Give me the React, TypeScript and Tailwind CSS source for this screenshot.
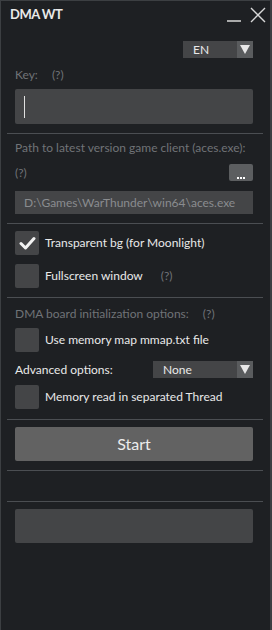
import React from "react";

function Divider() {
  return <div className="h-px bg-[#4b4e52] ml-[-8px] mr-[-10px]" />;
}

function Checkbox({ checked }: { checked?: boolean }) {
  return (
    <div className="w-[24px] h-[24px] rounded-[2px] bg-[#444547] flex items-center justify-center shrink-0">
      {checked && (
        <svg width="17" height="14" viewBox="0 0 17 14">
          <path d="M2 7.5 L6.5 12 L15 2.5" stroke="#f2f2f2" strokeWidth="3" fill="none" strokeLinecap="round" strokeLinejoin="round" />
        </svg>
      )}
    </div>
  );
}

function Arrow() {
  return (
    <div className="w-[16px] self-stretch bg-[#5a5c5e] flex items-center justify-center">
      <svg width="10" height="9" viewBox="0 0 10 9">
        <path d="M0 0 H10 L5 9 Z" fill="#e8e8e8" />
      </svg>
    </div>
  );
}

export default function App() {
  return (
    <div
      className="w-[272px] h-[630px] bg-[#1e2023] border-l border-r-2 border-t border-[#3c3f42] text-[#e9e9e9] flex flex-col"
      style={{ fontFamily: "Lato, 'Noto Sans', sans-serif" }}
    >
      {/* Title */}
      <div className="flex items-center justify-between h-[28px] pl-[9px] pr-[4px]">
        <span className="text-[13px] font-bold tracking-[-0.5px]">DMA WT</span>
        <div className="flex items-center gap-[8px]">
          <svg width="16" height="16" viewBox="0 0 16 16">
            <path d="M1 14 H15" stroke="#d8d8d8" strokeWidth="1.5" />
          </svg>
          <svg width="16" height="16" viewBox="0 0 16 16">
            <path d="M1 1 L15 15 M15 1 L1 15" stroke="#d8d8d8" strokeWidth="1.4" />
          </svg>
        </div>
      </div>

      <div className="flex flex-col pl-[14px] pr-[17px]">
        {/* Language */}
        <div className="flex justify-end mt-[12px]">
          <div className="w-[70px] h-[17px] bg-[#444547] flex items-center">
            <span className="flex-1 pl-[10px] text-[12px] leading-none">EN</span>
            <Arrow />
          </div>
        </div>

        <div className="flex gap-[14px] text-[12px] text-[#707377] mt-[10px] h-[14px] items-center">
          <span>Key:</span>
          <span>(?)</span>
        </div>

        <div className="mt-[7px] h-[35px] bg-[#444547] rounded-[2px] flex items-center pl-[9px]">
          <div className="w-px h-[22px] bg-[#e0e0e0]" />
        </div>

        <div className="mt-[9px]">
          <Divider />
        </div>

        <div className="text-[12px] text-[#707377] mt-[7px] leading-[14px] whitespace-nowrap">
          Path to latest version game client (aces.exe):
        </div>
        <div className="flex items-center justify-between mt-[9px] h-[17px]">
          <span className="text-[12px] text-[#707377]">(?)</span>
          <div className="w-[24px] h-[17px] bg-[#5c5e60] rounded-[2px] flex items-end justify-center gap-[1px] pb-[2px]">
            <div className="w-[2px] h-[2px] bg-white" />
            <div className="w-[2px] h-[2px] bg-white" />
            <div className="w-[2px] h-[2px] bg-white" />
          </div>
        </div>

        <div className="mt-[10px] h-[23px] bg-[#444547] flex items-center pl-[9px] text-[12px] text-[#8a8c8f] whitespace-nowrap">
          D:\Games\WarThunder\win64\aces.exe
        </div>

        <div className="mt-[9px]">
          <Divider />
        </div>

        <div className="flex items-center gap-[6px] mt-[7px] text-[12px]">
          <Checkbox checked />
          <span>Transparent bg (for Moonlight)</span>
        </div>
        <div className="flex items-center gap-[6px] mt-[9px] text-[12px]">
          <Checkbox />
          <span>Fullscreen window</span>
          <span className="ml-[12px] text-[12px] text-[#707377]">(?)</span>
        </div>

        <div className="mt-[9px]">
          <Divider />
        </div>

        <div className="flex gap-[14px] text-[12px] text-[#707377] mt-[9px] h-[14px] items-center whitespace-nowrap">
          <span>DMA board initialization options:</span>
          <span>(?)</span>
        </div>

        <div className="flex items-center gap-[6px] mt-[7px] text-[12px]">
          <Checkbox />
          <span>Use memory map mmap.txt file</span>
        </div>

        <div className="flex items-center justify-between mt-[9px] h-[17px] text-[12px]">
          <span>Advanced options:</span>
          <div className="w-[100px] h-[17px] bg-[#444547] flex items-center">
            <span className="flex-1 pl-[10px] leading-none">None</span>
            <Arrow />
          </div>
        </div>

        <div className="flex items-center gap-[6px] mt-[7px] text-[12px]">
          <Checkbox />
          <span>Memory read in separated Thread</span>
        </div>

        <div className="mt-[10px]">
          <Divider />
        </div>

        <div className="mt-[7px] h-[34px] bg-[#626262] rounded-[2px] flex items-center justify-center text-[16px] text-[#ececec]">
          Start
        </div>

        <div className="mt-[9px]">
          <Divider />
        </div>
        <div className="mt-[30px]">
          <Divider />
        </div>

        <div className="mt-[7px] h-[34px] bg-[#444547] rounded-[2px]" />
      </div>
    </div>
  );
}
